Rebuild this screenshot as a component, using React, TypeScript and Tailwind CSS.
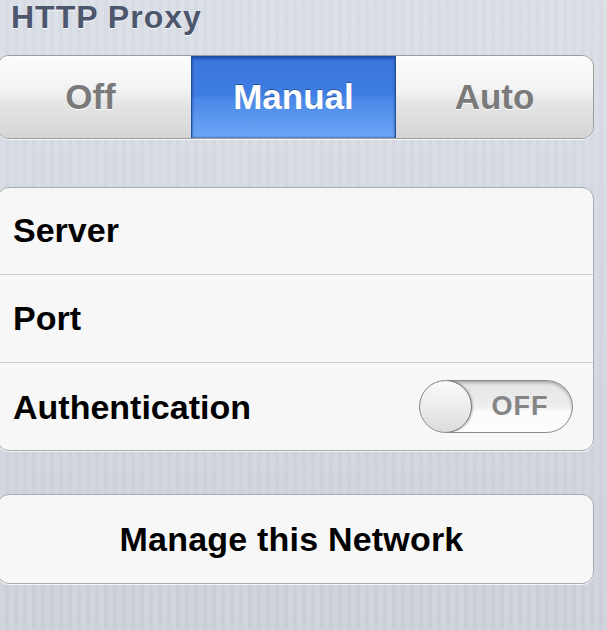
import React from "react";

const rowText = "text-[34px] font-bold leading-none text-black";

function Segment({
  label,
  active,
  className,
}: {
  label: string;
  active?: boolean;
  className: string;
}) {
  if (active) {
    return (
      <div
        className={`${className} flex items-center justify-center border-x border-[#1f4f9e] bg-[linear-gradient(180deg,#2f69d2_0%,#3b78de_8%,#3e7de3_48%,#4a88e8_52%,#6ca6f6_100%)] pb-[2px] shadow-[inset_0_2px_3px_rgba(10,30,90,0.45),inset_0_-1px_2px_rgba(10,30,90,0.3)]`}
      >
        <span className="text-[35px] font-bold leading-none text-white [text-shadow:0_-1px_0_rgba(0,0,0,0.35)]">
          {label}
        </span>
      </div>
    );
  }
  return (
    <div
      className={`${className} flex items-center justify-center bg-[linear-gradient(180deg,#fdfdfd_0%,#f1f1f1_45%,#e6e6e6_55%,#d5d5d5_100%)] pb-[2px]`}
    >
      <span className="text-[35px] font-bold leading-none text-[#7a7a7a] [text-shadow:0_1px_0_#ffffff]">
        {label}
      </span>
    </div>
  );
}

function Toggle() {
  return (
    <div className="flex h-[53px] w-[154px] items-center overflow-hidden rounded-full border border-[#8a8a8a] bg-[linear-gradient(180deg,#e4e4e4_0%,#eeeeee_50%,#fbfbfb_60%,#fdfdfd_100%)] shadow-[inset_0_2px_3px_rgba(0,0,0,0.25)]">
      <div className="-ml-px h-[53px] w-[53px] shrink-0 rounded-full border border-[#6f6f6f] bg-[linear-gradient(180deg,#fafafa_0%,#ececec_50%,#dcdcdc_100%)] shadow-[1px_0_2px_rgba(0,0,0,0.25)]" />
      <span className="flex-1 pr-[4px] text-center text-[27px] font-bold leading-none tracking-[1px] text-[#858585]">
        OFF
      </span>
    </div>
  );
}

export default function App() {
  return (
    <div className="min-h-screen w-[607px] overflow-hidden bg-[linear-gradient(180deg,#d7dce4_0%,#c9ced8_100%)] font-['Liberation_Sans',Arial,sans-serif]">
      <div className="min-h-screen bg-[repeating-linear-gradient(90deg,rgba(255,255,255,0.12)_0px,rgba(255,255,255,0.12)_5px,rgba(0,0,0,0)_5px,rgba(0,0,0,0)_9px)] pr-[13px]">
        <div className="pl-[11px] pt-[1px] text-[32px] font-bold leading-[32px] tracking-[1px] text-[#4c566c] [text-shadow:0_1px_0_rgba(255,255,255,0.9)]">
          HTTP Proxy
        </div>

        <div className="-ml-[3px] mt-[22px] flex h-[84px] overflow-hidden rounded-[12px] border border-[#9c9c9c] shadow-[0_1px_0_rgba(255,255,255,0.7)]">
          <Segment label="Off" className="w-[193px] pr-[8px]" />
          <Segment label="Manual" active className="w-[205px]" />
          <Segment label="Auto" className="flex-1" />
        </div>

        <div className="-ml-[3px] mt-[48px] overflow-hidden rounded-[12px] border border-[#a8abb1] bg-[#f7f7f7] shadow-[0_1px_0_rgba(255,255,255,0.75)]">
          <div className="flex h-[86px] items-center pb-[3px] pl-[15px]">
            <span className={rowText}>Server</span>
          </div>
          <div className="flex h-[88px] items-center border-t border-[#cdcdcd] pb-[2px] pl-[15px]">
            <span className={rowText}>Port</span>
          </div>
          <div className="flex h-[88px] items-center justify-between border-t border-[#cdcdcd] pl-[15px] pr-[20px]">
            <span className={rowText}>Authentication</span>
            <Toggle />
          </div>
        </div>

        <div className="-ml-[3px] mt-[43px] flex h-[90px] items-center justify-center rounded-[12px] border border-[#a8abb1] bg-[#f7f7f7] pr-[8px] shadow-[0_1px_0_rgba(255,255,255,0.75)]">
          <span className={`${rowText} tracking-[0.2px]`}>Manage this Network</span>
        </div>
      </div>
    </div>
  );
}
